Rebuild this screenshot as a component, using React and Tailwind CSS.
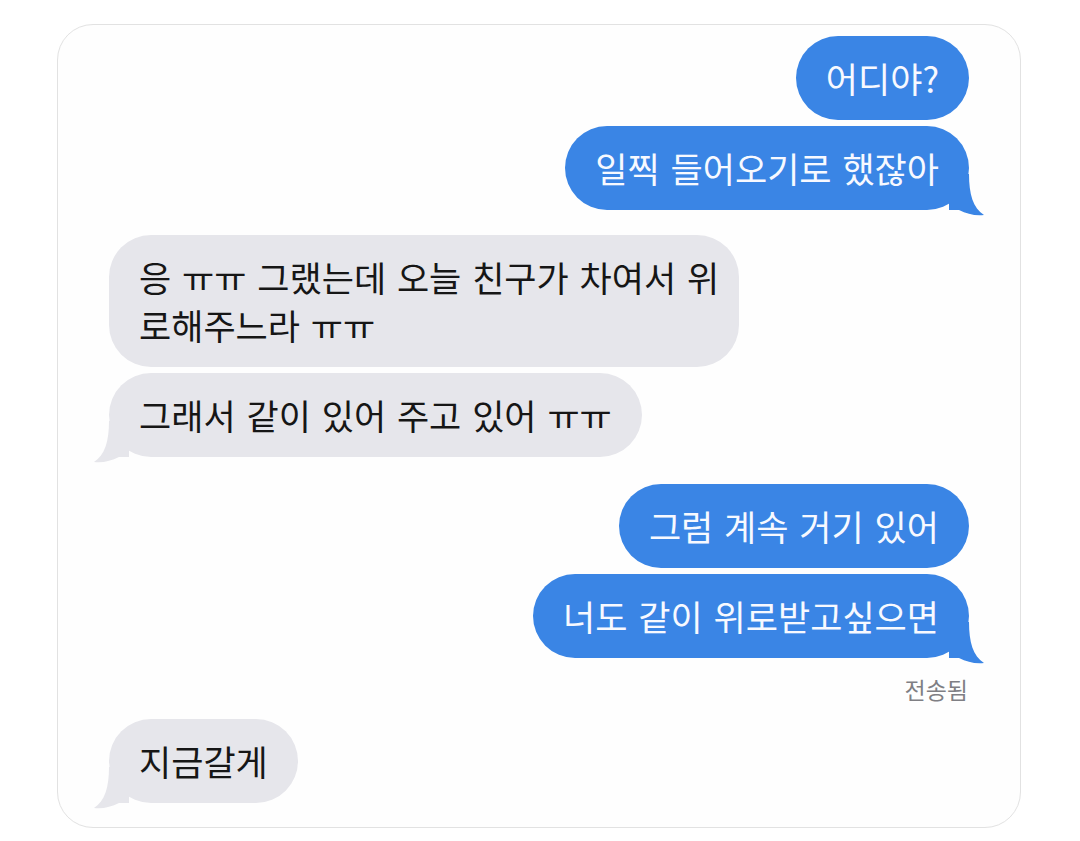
const Tail = ({ side, color }) => {
    if (side === "right") {
        return (
            <svg className="absolute right-[-16px] bottom-[-6px]" width="36" height="42" viewBox="0 0 36 42">
                <path d="M0 0 L20 0 C20 20 24 34 35 41 C26 42 18 40 10 36 L0 36 Z" fill={color} />
            </svg>
        )
    }
    return (
        <svg className="absolute left-[-16px] bottom-[-6px]" width="36" height="42" viewBox="0 0 36 42">
            <path d="M36 0 L16 0 C16 20 12 34 1 41 C10 42 18 40 26 36 L36 36 Z" fill={color} />
        </svg>
    )
}

const Sent = ({ children, tail, className = "" }) => (
    <div className={"relative self-end rounded-[42px] bg-[#3a85e5] px-[30px] py-[18px] text-[35px] leading-[48px] [word-spacing:3px] text-[#f7f9ff] whitespace-nowrap " + className}>
        {children}
        {tail && <Tail side="right" color="#3a85e5" />}
    </div>
)

const Received = ({ children, tail, className = "" }) => (
    <div className={"relative self-start rounded-[42px] bg-[#e6e6eb] px-[30px] py-[18px] text-[35px] leading-[48px] [word-spacing:3px] text-[#161616] whitespace-nowrap " + className}>
        {children}
        {tail && <Tail side="left" color="#e6e6eb" />}
    </div>
)

const App = () => {
    return (
        <div className="min-h-screen bg-white pt-[24px] font-['Noto_Sans_CJK_KR','Noto_Sans',sans-serif]">
            <div className="ml-[57px] w-[964px] h-[804px] rounded-[36px] border border-[#e2e2e2] bg-[#fefefe] px-[51px] pt-[11px] flex flex-col">

                <Sent>어디야?</Sent>
                <Sent tail className="mt-[6px]">일찍 들어오기로 했잖아</Sent>

                <Received className="mt-[25px] w-[630px]">
                    응 ㅠㅠ 그랬는데 오늘 친구가 차여서 위<br />로해주느라 ㅠㅠ
                </Received>
                <Received tail className="mt-[6px]">그래서 같이 있어 주고 있어 ㅠㅠ</Received>

                <Sent className="mt-[27px]">그럼 계속 거기 있어</Sent>
                <Sent tail className="mt-[6px]">너도 같이 위로받고싶으면</Sent>

                <p className="self-end mt-[18px] mr-[1px] text-[23px] leading-[26px] text-[#7f7f84]">전송됨</p>

                <Received tail className="mt-[17px]">지금갈게</Received>
            </div>
        </div>
    )
}

export default App
